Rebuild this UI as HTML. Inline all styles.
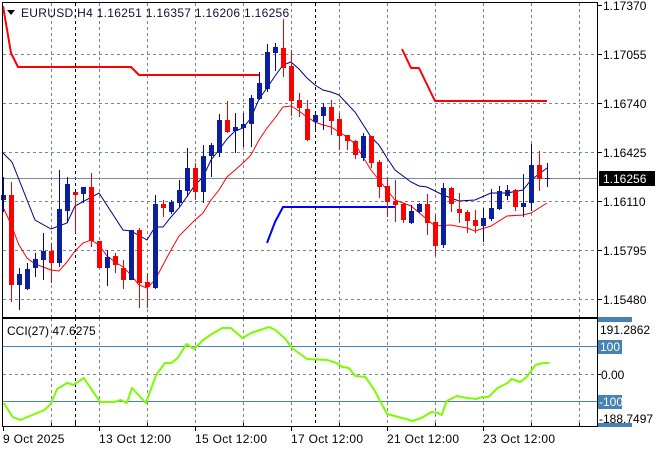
<!DOCTYPE html>
<html><head><meta charset="utf-8"><style>
html,body{margin:0;padding:0;background:#fff;}
svg{display:block;font-family:"Liberation Sans",sans-serif;}
</style></head><body>
<svg width="660" height="450" viewBox="0 0 660 450" xmlns="http://www.w3.org/2000/svg">
<rect width="660" height="450" fill="#fff"/>
<g stroke="#7a8590" stroke-width="1" stroke-dasharray="3,3" fill="none">
<path d="M51.5 3V317M99.5 3V317M147.5 3V317M195.5 3V317M243.5 3V317M291.5 3V317M339.5 3V317M387.5 3V317M435.5 3V317M483.5 3V317M531.5 3V317M579.5 3V317"/>
<path d="M3 54.5H597M3 103.5H597M3 152.5H597M3 201.5H597M3 250.5H597M3 299.5H597"/>
<path d="M51.5 318V426M99.5 318V426M147.5 318V426M195.5 318V426M243.5 318V426M291.5 318V426M339.5 318V426M387.5 318V426M435.5 318V426M483.5 318V426M531.5 318V426M579.5 318V426"/>
<path d="M3 374.5H597"/>
</g>
<g stroke="#000" stroke-width="1" stroke-dasharray="3,3"><path d="M75.5 3V317M315.5 3V317M75.5 318V426M315.5 318V426"/></g>
<path d="M3 178.5H597" stroke="#7a8a99" stroke-width="1"/>
<path d="M3 346.5H597M3 401.5H597" stroke="#4682B4" stroke-width="1"/>
<g fill="none" stroke-width="2" stroke-linejoin="round">
<polyline stroke="#ff0000" points="3,6 11,53 18,67 131,67 139,75 259,75"/>
<polyline stroke="#ff0000" points="402,49 411,68 419,68 435,101 547,101"/>
<polyline stroke="#0000ff" points="267,243 275,222 283,207 395,207"/>
</g>
<polyline fill="none" stroke="#00007f" stroke-width="1" points="2,152 12,162 35,220 51,229 67,223 75,206 99,193 123,230 131,231 147,240 155,227 163,227 171,217 179,208 195,185 203,177 211,160 219,150 227,139 235,131 243,128 251,118 259,99 267,88 275,76 283,65 291,62 299,69 307,78 315,85 323,90 331,92 339,95 355,112 371,137 379,145 387,158 395,170 411,182 419,186 427,187 443,195 459,201 475,200 491,193 507,193 523,190 531,180 547,168"/>
<polyline fill="none" stroke="#ff0000" stroke-width="1" points="2,205 10,222 19,245 27,258 35,264 51,270 59,271 67,262 75,251 83,243 91,240 99,245 107,256 115,262 123,267 131,275 139,285 147,288 155,280 163,265 171,250 179,236 195,220 203,213 211,200 219,190 227,177 235,170 243,163 251,155 259,140 267,128 275,118 283,107 291,106 299,111 307,117 315,122 323,125 331,127 347,137 355,144 371,170 379,180 395,200 411,206 435,226 451,225 467,228 475,231 491,226 507,216 523,215 531,213 547,203"/>
<g stroke-width="1">
<g stroke="#0000cc" fill="#0a1fa0">
<path d="M3.5 177V212M19.5 268V310M27.5 263V290M35.5 253V277M43.5 233V280M59.5 170V267M67.5 177V223M83.5 187V203M107.5 250V286M131.5 230V280M155.5 195V289M171.5 200V214M179.5 180V207M187.5 148V197M203.5 145V203M211.5 143V177M219.5 114V157M235.5 113V153M243.5 113V147M251.5 95V147M259.5 72V100M267.5 44V92M275.5 43V71M315.5 113V131M323.5 103V130M363.5 133V161M411.5 205V224M419.5 203V213M443.5 183V248M483.5 208V242M491.5 189V221M499.5 186V210M507.5 185V200M523.5 174V217M531.5 144V211M547.5 163V187"/>
</g>
<g fill="#0a1fa0" stroke="none">
<rect x="1" y="195" width="5" height="5"/><rect x="17" y="274" width="5" height="11"/><rect x="25" y="269" width="5" height="20"/><rect x="33" y="259" width="5" height="9"/><rect x="41" y="251" width="5" height="9"/><rect x="57" y="209" width="5" height="54"/><rect x="65" y="184" width="5" height="27"/><rect x="81" y="187" width="5" height="7"/><rect x="105" y="257" width="5" height="11"/><rect x="129" y="230" width="5" height="50"/><rect x="153" y="204" width="5" height="84"/><rect x="169" y="202" width="5" height="10"/><rect x="177" y="190" width="5" height="13"/><rect x="185" y="168" width="5" height="23"/><rect x="201" y="156" width="5" height="36"/><rect x="209" y="145" width="5" height="11"/><rect x="217" y="120" width="5" height="33"/><rect x="233" y="127" width="5" height="4"/><rect x="241" y="124" width="5" height="4"/><rect x="249" y="98" width="5" height="26"/><rect x="257" y="83" width="5" height="16"/><rect x="265" y="52" width="5" height="37"/><rect x="273" y="47" width="5" height="6"/><rect x="313" y="115" width="5" height="7"/><rect x="321" y="107" width="5" height="9"/><rect x="361" y="136" width="5" height="22"/><rect x="409" y="211" width="5" height="12"/><rect x="417" y="204" width="5" height="8"/><rect x="441" y="188" width="5" height="57"/><rect x="481" y="218" width="5" height="8"/><rect x="489" y="208" width="5" height="11"/><rect x="497" y="191" width="5" height="18"/><rect x="505" y="190" width="5" height="6"/><rect x="521" y="203" width="5" height="4"/><rect x="529" y="165" width="5" height="38"/><rect x="545" y="178" width="5" height="1"/>
</g>
<g stroke="#ff0000">
<path d="M11.5 182V302M51.5 243V283M75.5 192V233M91.5 173V247M99.5 241V268M115.5 253V273M123.5 260V289M139.5 228V308M147.5 273V308M163.5 200V217M195.5 163V200M227.5 101V133M283.5 19V77M291.5 50V116M299.5 93V117M307.5 100V141M331.5 100V135M339.5 113V150M347.5 135V150M355.5 140V159M371.5 136V168M379.5 160V198M387.5 177V217M395.5 180V222M403.5 203V223M427.5 194V235M435.5 215V256M451.5 187V212M459.5 193V223M467.5 210V233M475.5 210V233M515.5 189V211M539.5 151V191"/>
</g>
<g fill="#ff0000">
<rect x="9" y="195" width="5" height="90"/><rect x="49" y="251" width="5" height="12"/><rect x="73" y="192" width="5" height="3"/><rect x="89" y="187" width="5" height="54"/><rect x="97" y="241" width="5" height="27"/><rect x="113" y="256" width="5" height="9"/><rect x="121" y="268" width="5" height="12"/><rect x="137" y="230" width="5" height="53"/><rect x="145" y="282" width="5" height="5"/><rect x="161" y="204" width="5" height="4"/><rect x="193" y="168" width="5" height="24"/><rect x="225" y="120" width="5" height="12"/><rect x="281" y="48" width="5" height="20"/><rect x="289" y="66" width="5" height="35"/><rect x="297" y="100" width="5" height="8"/><rect x="305" y="109" width="5" height="31"/><rect x="329" y="107" width="5" height="14"/><rect x="337" y="119" width="5" height="17"/><rect x="345" y="135" width="5" height="6"/><rect x="353" y="141" width="5" height="14"/><rect x="369" y="136" width="5" height="27"/><rect x="377" y="162" width="5" height="25"/><rect x="385" y="186" width="5" height="16"/><rect x="393" y="201" width="5" height="4"/><rect x="401" y="204" width="5" height="16"/><rect x="425" y="204" width="5" height="19"/><rect x="433" y="222" width="5" height="24"/><rect x="449" y="188" width="5" height="16"/><rect x="457" y="209" width="5" height="4"/><rect x="465" y="212" width="5" height="9"/><rect x="473" y="220" width="5" height="6"/><rect x="513" y="190" width="5" height="17"/><rect x="537" y="165" width="5" height="14"/>
</g>
</g>
<polyline fill="none" stroke="#7cfc00" stroke-width="2" stroke-linejoin="round" transform="matrix(1.269 0 0 1 0 0)" vector-effect="non-scaling-stroke" points="3,403 10,417 16,420 35,410 40,404 45,389 53,383 58,385 66,378 79,402 90,402 95,400 100,403 104,388 115,403 123,375 130,363 135,363 140,358 147,344 153,349 160,340 167,334 175,328 182,328 191,338 198,333 212,327 217,330 225,339 230,348 242,359 258,360 265,363 270,367 275,368 280,376 288,377 295,390 305,414 320,419 325,421 332,418 340,412 345,413 348,415 352,401 360,396 368,398 375,399 380,397 385,397 392,388 400,383 403,379 410,382 415,377 422,365 428,363 433,363"/>
<rect x="2.5" y="2.5" width="595" height="315" fill="none" stroke="#000"/>
<rect x="2.5" y="318.5" width="595" height="108" fill="none" stroke="#000"/>
<g stroke="#000"><path d="M598 5.5h4M598 54.5h4M598 103.5h4M598 152.5h4M598 201.5h4M598 250.5h4M598 299.5h4M598 374.5h3"/>
<path d="M3.5 426v5M51.5 423v4M75.5 423v4M99.5 426v5M147.5 423v4M195.5 426v5M243.5 423v4M291.5 426v5M339.5 423v4M387.5 426v5M435.5 423v4M483.5 426v5M531.5 423v4M579.5 423v4"/></g>
<path d="M7 10h8l-4 5z" fill="#000"/>
<text x="21" y="17" font-size="12" letter-spacing="0.3" fill="#10103a">EURUSD,H4  1.16251 1.16357 1.16206 1.16256</text>
<text x="7" y="335" font-size="12" fill="#000">CCI(27) 47.6275</text>
<g font-size="12" fill="#000">
<text x="603" y="10">1.17370</text><text x="603" y="59">1.17055</text><text x="603" y="108">1.16740</text><text x="603" y="157">1.16425</text><text x="603" y="206">1.16110</text><text x="603" y="255">1.15795</text><text x="603" y="304">1.15480</text>
</g>
<rect x="599" y="171" width="56" height="15" fill="#000"/>
<text x="603" y="183" font-size="12" fill="#fff">1.16256</text>
<rect x="598" y="317" width="34" height="5" fill="#4682B4"/>
<text x="600" y="334" font-size="12" fill="#000">191.2862</text>
<rect x="598" y="340" width="24" height="14" fill="#4682B4"/>
<text x="600" y="351" font-size="12" fill="#fff">100</text>
<text x="601" y="379" font-size="12" fill="#000">0.00</text>
<rect x="598" y="395" width="24" height="14" fill="#4682B4"/>
<text x="599" y="406" font-size="12" fill="#fff">-100</text>
<rect x="598" y="423" width="34" height="4" fill="#4682B4"/>
<text x="599" y="423" font-size="12" fill="#000">-188.7497</text>
<g font-size="12" fill="#000" letter-spacing="0.3">
<text x="3" y="443">9 Oct 2025</text><text x="99" y="443">13 Oct 12:00</text><text x="195" y="443">15 Oct 12:00</text><text x="291" y="443">17 Oct 12:00</text><text x="387" y="443">21 Oct 12:00</text><text x="483" y="443">23 Oct 12:00</text>
</g>
</svg>
</body></html>
